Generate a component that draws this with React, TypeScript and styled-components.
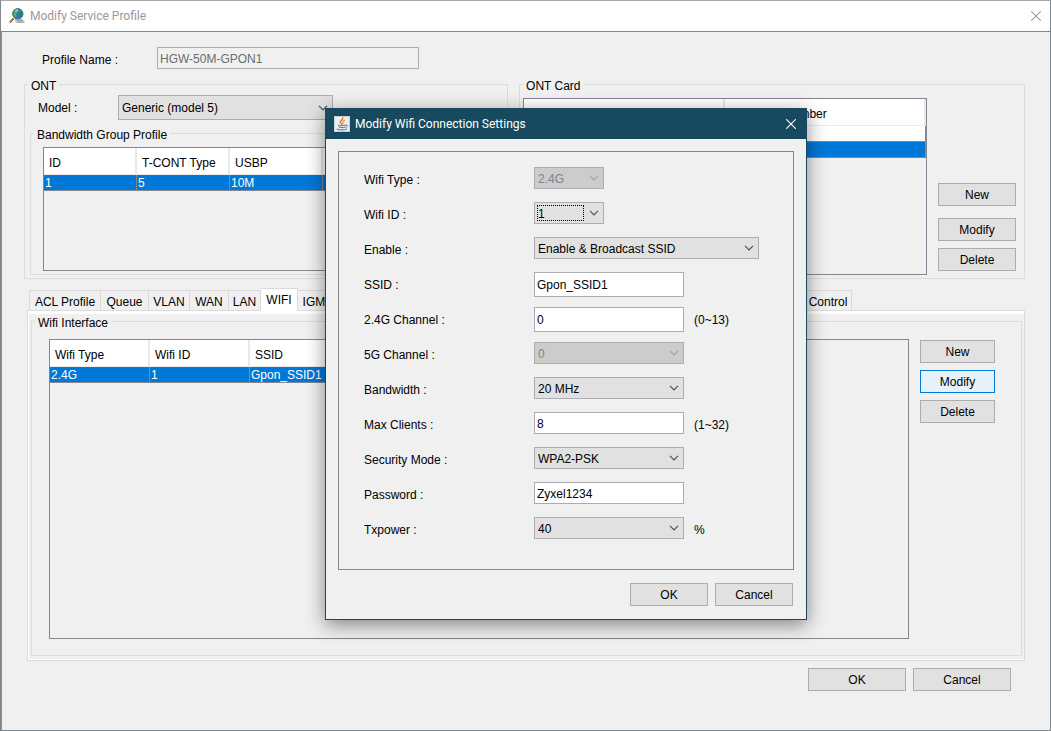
import React from "react";
import styled, { createGlobalStyle, css } from "styled-components";

const GlobalStyle = createGlobalStyle`
  *, *::before, *::after { box-sizing: border-box; }
  body {
    margin: 0;
    background: #f0f0f0;
    color: #000;
    font: 12px/14px "Liberation Sans", Arial, sans-serif;
  }
  button, input, select { font: inherit; color: inherit; margin: 0; border-radius: 0; }
`;

/* ---------- windows ---------- */

const MainWindow = styled.div`
  position: relative;
  display: flex;
  flex-direction: column;
  min-height: 100vh;
  border: 1px solid #82868f;
  border-top-color: #a9a9a9;
`;

const TitleBar = styled.header<{ $active?: boolean }>`
  display: flex;
  align-items: center;
  gap: 5px;
  height: ${(p) => (p.$active ? 30 : 31)}px;
  font: 12px/16px Roboto, "Noto Sans", sans-serif;
  ${(p) =>
    p.$active
      ? css`padding: 0 8px; background: #174a5e; color: #fff;`
      : css`padding: 0 7px 0 8px; background: #fff; color: #999; border-bottom: 1px solid #82868f;`}
`;

const WindowTitle = styled.h1`
  flex: 1;
  margin: 0;
  font: inherit;
`;

const CloseButton = styled.button`
  display: flex;
  padding: 2px;
  border: 0;
  background: none;
`;

const MainBody = styled.main`
  display: flex;
  flex: 1;
  flex-direction: column;
  padding: 15px 25px 39px 22px;
  border-left: 1px solid #8c8f96;
`;

const Dialog = styled.section`
  position: absolute;
  top: 107px;
  left: 324px;
  width: 482px;
  border: 1px solid #174a5e;
  background: #f0f0f0;
  box-shadow: 0 5px 18px rgba(0, 0, 0, 0.45);
`;

const DialogBody = styled.div`
  padding: 12px 12px 13px;
`;

const DialogPanel = styled.div`
  padding: 15px 25px 17px;
  border: 1px solid #828790;
`;

/* ---------- form parts ---------- */

const ProfileRow = styled.div`
  display: flex;
  align-items: center;
  margin-bottom: 7px;
  padding-left: 18px;
`;

const ProfileLabel = styled.label`
  width: 115px;
  padding-top: 4px;
`;

const ModelRow = styled.div`
  display: flex;
  align-items: center;
  margin-bottom: 5px;
  padding-left: 8px;
`;

const ModelLabel = styled.label`
  width: 80px;
`;

const FormRow = styled.div`
  display: flex;
  align-items: flex-start;
  height: 35px;
`;

const FormLabel = styled.label`
  width: 170px;
  line-height: 26px;
`;

const Hint = styled.span`
  margin-left: 10px;
  line-height: 26px;
`;

const TextInput = styled.input<{ $width: number; $tall?: boolean }>`
  width: ${(p) => p.$width}px;
  height: ${(p) => (p.$tall ? 25 : 22)}px;
  padding: 1px 2px 0;
  border: 1px solid #abadb3;
  outline: 0;
  background: #fff;
  &:disabled { background: #f0f0f0; color: #6d6d6d; }
`;

const SelectBox = styled.div<{ $width: number; $tall?: boolean; $focused?: boolean }>`
  display: grid;
  grid-template-columns: 1fr 19px;
  width: ${(p) => p.$width}px;
  height: ${(p) => (p.$tall ? 25 : 22)}px;
  ${(p) =>
    p.$focused &&
    css`
      &::after {
        content: "";
        grid-area: 1 / 1;
        margin: 3px 1px 3px 3px;
        border: 1px dotted #000;
        pointer-events: none;
      }
    `}
`;

const SelectField = styled.select`
  grid-area: 1 / 1 / 2 / 3;
  appearance: none;
  padding: 1px 20px 0 3px;
  border: 1px solid #adadb3;
  outline: 0;
  background: #e1e1e1;
  &:disabled { background: #ccc; color: #838383; opacity: 1; }
`;

const Chevron = styled.svg<{ $faded?: boolean }>`
  grid-area: 1 / 2;
  place-self: center start;
  width: 10px;
  height: 6px;
  margin-left: 4px;
  fill: none;
  stroke: ${(p) => (p.$faded ? "#a3a3a3" : "#505050")};
  stroke-width: 1.2;
  pointer-events: none;
`;

const PushButton = styled.button<{ $width: number; $hot?: boolean }>`
  width: ${(p) => p.$width}px;
  height: 23px;
  padding: 0;
  border: 1px solid ${(p) => (p.$hot ? "#0078d7" : "#adadad")};
  background: ${(p) => (p.$hot ? "#e5f1fb" : "#e1e1e1")};
`;

const ButtonBar = styled.div<{ $right?: number; $top: number }>`
  display: flex;
  justify-content: flex-end;
  gap: 7px;
  margin-top: ${(p) => p.$top}px;
  padding-right: ${(p) => p.$right ?? 0}px;
`;

/* ---------- groups ---------- */

const Group = styled.fieldset<{ $grow?: number }>`
  min-width: 0;
  margin: 0;
  padding: 0;
  border: 1px solid #dcdcdc;
  ${(p) => p.$grow && css`flex: ${p.$grow} 1 0;`}
`;

const GroupTitle = styled.legend`
  margin-left: 3px;
  padding: 3px 3px 0;
`;

const GroupBody = styled.div<{ $pad: string }>`
  height: 100%;
  padding: ${(p) => p.$pad};
`;

const TopGroups = styled.div`
  display: flex;
  gap: 11px;
`;

const ListWithButtons = styled.div`
  display: flex;
  gap: 11px;
  height: 100%;
`;

const CardButtons = styled.div`
  display: flex;
  flex-direction: column;
  justify-content: flex-end;
  gap: 7px;
  padding-bottom: 4px;
  button:first-child { margin-bottom: 5px; }
`;

const WifiButtons = styled.div`
  display: flex;
  flex-direction: column;
  gap: 7px;
  padding-top: 1px;
`;

/* ---------- tables ---------- */

const TableFrame = styled.div<{ $height?: number }>`
  flex: 1;
  min-width: 0;
  min-height: ${(p) => p.$height ?? 0}px;
  overflow: hidden;
  border: 1px solid #828790;
`;

const DataTable = styled.table<{ $width: string }>`
  width: ${(p) => p.$width};
  table-layout: fixed;
  border-spacing: 0;
  th, td { overflow: hidden; text-align: left; white-space: nowrap; }
  th {
    height: 27px;
    padding: 4px 0 0 5px;
    border-right: 2px solid #e9e9e9;
    border-bottom: 1px solid #ededed;
    background: #fff;
    font-weight: 400;
  }
  td {
    height: 16px;
    padding: 0 1px;
    border-right: 1px solid #828790;
    border-bottom: 1px solid #828790;
  }
`;

const DataRow = styled.tr<{ $selected?: boolean }>`
  background: ${(p) => (p.$selected ? "#0078d7" : "#fff")};
  color: ${(p) => (p.$selected ? "#fff" : "#000")};
`;

/* ---------- tabs ---------- */

const TabStrip = styled.div`
  display: flex;
  align-items: flex-end;
  height: 22px;
  margin: 9px 0 0 5px;
`;

const Tab = styled.button<{ $selected?: boolean; $width: number }>`
  position: relative;
  width: ${(p) => p.$width}px;
  height: ${(p) => (p.$selected ? 23 : 20)}px;
  margin-bottom: ${(p) => (p.$selected ? -1 : 0)}px;
  padding: ${(p) => (p.$selected ? "0 0 1px" : "2px 0 0")};
  overflow: hidden;
  border: 1px solid #d9d9d9;
  border-width: 1px 1px 0 0;
  background: ${(p) => (p.$selected ? "#fff" : "#f0f0f0")};
  white-space: nowrap;
  &:first-child { border-left-width: 1px; }
`;

const TabPane = styled.div`
  display: flex;
  flex: 1;
  margin-left: 3px;
  padding: 2px 2px 4px 3px;
  border: 1px solid #dcdcdc;
  box-shadow: inset 1px 3px 0 #fff, inset 0 -1px 0 #fff;
`;

/* ---------- icons ---------- */

const GlobeSearchIcon = () => (
  <svg width="16" height="16" viewBox="0 0 16 16" aria-hidden="true">
    <path d="M6 11h8v1.500h1.500v2.500h-9v-2h-1z" fill="#c3c5c8" />
    <path d="M8 12.500h6M8 14.200h6.500" stroke="#8b8f94" strokeWidth=".7" />
    <circle cx="8.800" cy="5.800" r="5.200" fill="#2d7cc0" stroke="#3c6685" />
    <path d="M5 3.500 8 1.500l2 1-1 2-2 .5.500 2-1.500 2.500L4.500 7z" fill="#52b848" />
    <path d="m10.500 5 2.500-1 .5 2.500-2 3-1.500-1z" fill="#238b4b" />
    <path d="M6.500 2.500 9 2" stroke="#d6f1ff" />
    <path d="m.8 14.600 3.800-4.200" stroke="#8a5b1b" strokeWidth="2" />
    <path d="m1 14 3.500-3.800" stroke="#d9a441" strokeWidth=".7" />
  </svg>
);

const JavaIcon = () => (
  <svg width="16" height="16" viewBox="0 0 16 16" aria-hidden="true">
    <rect width="16" height="16" rx="1" fill="#eceff2" />
    <path d="M.5.500h15v15H.5z" fill="none" stroke="#c4ced6" />
    <g fill="none" strokeLinecap="round">
      <path d="M8.800 1.800c.8 2-3 2.700-2.600 4.400.2.900 1.400 1.300 1.600 2.200" stroke="#e76f00" strokeWidth="1.300" />
      <path d="M10.600 4.200C8.500 5 8.300 5.700 9 6.600c.4.600.2 1.200-.4 1.700" stroke="#e76f00" />
      <path d="M4.200 9.300c2 .7 5 .6 7-.1M5 11.200c1.800.6 4 .6 5.700 0M3 13.200c2.800 1 7.200.9 9.700-.1M11.800 9c2-.6 2.300 1.600.2 2.300" stroke="#45769b" />
    </g>
  </svg>
);

const CloseIcon = () => (
  <svg width="10" height="10" viewBox="0 0 10 10" aria-hidden="true">
    <path d="m.2.200 9.600 9.600m0-9.600L.2 9.800" fill="none" stroke="currentColor" strokeWidth="1.100" />
  </svg>
);

/* ---------- composed controls ---------- */

interface DropDownProps {
  id: string;
  value: string;
  width: number;
  disabled?: boolean;
  focused?: boolean;
  tall?: boolean;
}

const DropDown = ({ id, value, width, disabled, focused, tall }: DropDownProps) => (
  <SelectBox $width={width} $tall={tall} $focused={focused}>
    <SelectField id={id} defaultValue={value} disabled={disabled}>
      <option>{value}</option>
    </SelectField>
    <Chevron viewBox="0 0 10 6" $faded={disabled} aria-hidden="true">
      <path d="m1 .8 4 4 4-4" />
    </Chevron>
  </SelectBox>
);

interface Field {
  id: string;
  label: string;
  value: string;
  kind: "select" | "text";
  width: number;
  disabled?: boolean;
  focused?: boolean;
  tall?: boolean;
  hint?: string;
}

const fields: Field[] = [
  { id: "wifi-type", label: "Wifi Type :", value: "2.4G", kind: "select", width: 70, disabled: true },
  { id: "wifi-id", label: "Wifi ID :", value: "1", kind: "select", width: 70, focused: true },
  { id: "enable", label: "Enable :", value: "Enable & Broadcast SSID", kind: "select", width: 225 },
  { id: "ssid", label: "SSID :", value: "Gpon_SSID1", kind: "text", width: 150, tall: true },
  { id: "channel-24", label: "2.4G Channel :", value: "0", kind: "text", width: 150, tall: true, hint: "(0~13)" },
  { id: "channel-5", label: "5G Channel :", value: "0", kind: "select", width: 150, disabled: true },
  { id: "bandwidth", label: "Bandwidth :", value: "20 MHz", kind: "select", width: 150 },
  { id: "max-clients", label: "Max Clients :", value: "8", kind: "text", width: 150, hint: "(1~32)" },
  { id: "security", label: "Security Mode :", value: "WPA2-PSK", kind: "select", width: 150 },
  { id: "password", label: "Password :", value: "Zyxel1234", kind: "text", width: 150 },
  { id: "txpower", label: "Txpower :", value: "40", kind: "select", width: 150, hint: "%" },
];

const tabs = [
  { name: "ACL Profile", width: 72 },
  { name: "Queue", width: 48 },
  { name: "VLAN", width: 41 },
  { name: "WAN", width: 39 },
  { name: "LAN", width: 32 },
  { name: "WIFI", width: 37 },
  { name: "IGMP Profile", width: 78 },
  { name: "Rate Limit", width: 387 },
  { name: "Access Control", width: 89 },
];

const WifiDialog = () => (
  <Dialog role="dialog" aria-label="Modify Wifi Connection Settings">
    <TitleBar $active>
      <JavaIcon />
      <WindowTitle as="h2">Modify Wifi Connection Settings</WindowTitle>
      <CloseButton aria-label="Close dialog"><CloseIcon /></CloseButton>
    </TitleBar>
    <DialogBody>
      <DialogPanel>
        {fields.map((f) => (
          <FormRow key={f.id}>
            <FormLabel htmlFor={f.id}>{f.label}</FormLabel>
            {f.kind === "select" ? (
              <DropDown id={f.id} value={f.value} width={f.width} disabled={f.disabled} focused={f.focused} />
            ) : (
              <TextInput id={f.id} defaultValue={f.value} $width={f.width} $tall={f.tall} />
            )}
            {f.hint && <Hint>{f.hint}</Hint>}
          </FormRow>
        ))}
      </DialogPanel>
      <ButtonBar $top={13} $right={1}>
        <PushButton $width={78}>OK</PushButton>
        <PushButton $width={78}>Cancel</PushButton>
      </ButtonBar>
    </DialogBody>
  </Dialog>
);

export default function App() {
  return (
    <>
      <GlobalStyle />
      <MainWindow>
        <TitleBar>
          <GlobeSearchIcon />
          <WindowTitle>Modify Service Profile</WindowTitle>
          <CloseButton aria-label="Close window"><CloseIcon /></CloseButton>
        </TitleBar>
        <MainBody>
          <ProfileRow>
            <ProfileLabel htmlFor="profile-name">Profile Name :</ProfileLabel>
            <TextInput id="profile-name" defaultValue="HGW-50M-GPON1" disabled $width={262} />
          </ProfileRow>

          <TopGroups>
            <Group $grow={484}>
              <GroupTitle>ONT</GroupTitle>
              <GroupBody $pad="2px 5px 3px">
                <ModelRow>
                  <ModelLabel htmlFor="model">Model :</ModelLabel>
                  <DropDown id="model" value="Generic (model 5)" width={215} tall />
                </ModelRow>
                <Group>
                  <GroupTitle>Bandwidth Group Profile</GroupTitle>
                  <GroupBody $pad="5px 12px 3px">
                    <TableFrame $height={124}>
                      <DataTable $width="100%">
                        <colgroup>
                          <col width="93" />
                          <col width="93" />
                          <col width="93" />
                          <col />
                        </colgroup>
                        <thead>
                          <tr><th>ID</th><th>T-CONT Type</th><th>USBP</th><th /></tr>
                        </thead>
                        <tbody>
                          <DataRow $selected><td>1</td><td>5</td><td>10M</td><td /></DataRow>
                        </tbody>
                      </DataTable>
                    </TableFrame>
                  </GroupBody>
                </Group>
              </GroupBody>
            </Group>

            <Group $grow={506}>
              <GroupTitle>ONT Card</GroupTitle>
              <GroupBody $pad="5px 8px 3px 3px">
                <ListWithButtons>
                  <TableFrame>
                    <DataTable $width="100%">
                      <thead>
                        <tr><th /><th>Total Port Number</th></tr>
                      </thead>
                      <tbody>
                        <DataRow><td /><td /></DataRow>
                        <DataRow $selected><td /><td /></DataRow>
                      </tbody>
                    </DataTable>
                  </TableFrame>
                  <CardButtons>
                    <PushButton $width={78}>New</PushButton>
                    <PushButton $width={78}>Modify</PushButton>
                    <PushButton $width={78}>Delete</PushButton>
                  </CardButtons>
                </ListWithButtons>
              </GroupBody>
            </Group>
          </TopGroups>

          <TabStrip role="tablist">
            {tabs.map((t) => (
              <Tab key={t.name} role="tab" aria-selected={t.name === "WIFI"} $selected={t.name === "WIFI"} $width={t.width}>
                {t.name}
              </Tab>
            ))}
          </TabStrip>
          <TabPane role="tabpanel">
            <Group $grow={1}>
              <GroupTitle>Wifi Interface</GroupTitle>
              <GroupBody $pad="9px 26px 16px 17px">
                <ListWithButtons>
                  <TableFrame $height={300}>
                    <DataTable $width="400px">
                      <thead>
                        <tr><th>Wifi Type</th><th>Wifi ID</th><th>SSID</th><th /></tr>
                      </thead>
                      <tbody>
                        <DataRow $selected><td>2.4G</td><td>1</td><td>Gpon_SSID1</td><td /></DataRow>
                      </tbody>
                    </DataTable>
                  </TableFrame>
                  <WifiButtons>
                    <PushButton $width={75}>New</PushButton>
                    <PushButton $width={75} $hot>Modify</PushButton>
                    <PushButton $width={75}>Delete</PushButton>
                  </WifiButtons>
                </ListWithButtons>
              </GroupBody>
            </Group>
          </TabPane>

          <ButtonBar $top={7} $right={14}>
            <PushButton $width={98}>OK</PushButton>
            <PushButton $width={98}>Cancel</PushButton>
          </ButtonBar>
        </MainBody>
        <WifiDialog />
      </MainWindow>
    </>
  );
}
